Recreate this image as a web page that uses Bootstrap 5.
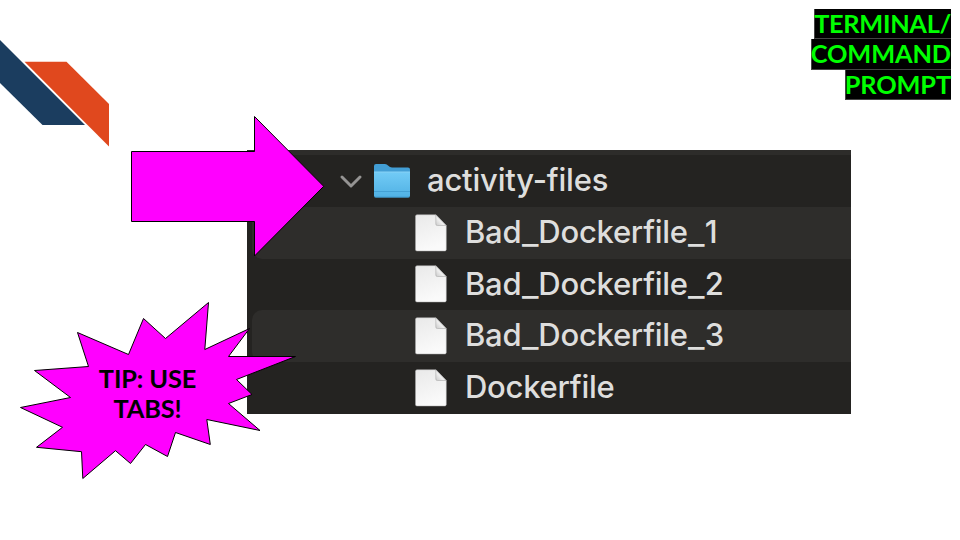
<!DOCTYPE html>
<html lang="en">
<head>
<meta charset="utf-8">
<meta name="viewport" content="width=device-width, initial-scale=1">
<title>Terminal / Command Prompt</title>
<link href="https://cdn.jsdelivr.net/npm/bootstrap@5.3.0/dist/css/bootstrap.min.css" rel="stylesheet">
<style>
  body { font-family: Lato, sans-serif; background: #fff; color: #000; }
  .slide { width: 960px; height: 540px; padding-top: 150px; padding-left: 247px; }
  .brand-mark { left: 0; top: 0; }
  .slide-title { top: 9px; right: 9px; font-size: 25.33px; line-height: 28.6px; letter-spacing: -.12px; font-weight: 700; color: #0f0; }
  .slide-title span { background: #000; height: 30.33px; box-shadow: inset 1px 0 #444, inset 0 -1px #444; }
  .slide-title span:first-child { letter-spacing: -.3px; }
  .finder { width: 604px; height: 264px; background: #242321; border-top: 5px solid #2d2c2a;
    font-family: Inter, "Liberation Sans", sans-serif; font-size: 31px; font-weight: 500; color: #dededd; }
  .entry { height: 51.8px; line-height: 50px; margin-left: 5px; }
  .entry.striped { background: #2e2d2b; border-radius: 10px 0 0 10px; }
  .entry.folder { padding-left: 88px; }
  .entry.file { padding-left: 163px; }
  .label { padding-bottom: 1.8px; }
  .folder .label { margin-left: 15px; letter-spacing: -.2px; }
  .file .label { margin-left: 18px; letter-spacing: -.25px; }
  .bar { display: inline-block; margin: 0 1.4px; transform: translateY(1px) scaleX(1.15); }
  .callout { left: 0; top: 0; }
  .tip { left: 78px; top: 363px; width: 139px; font-size: 25.33px; line-height: 30.33px; letter-spacing: -.12px; font-weight: 700; }
</style>
</head>
<body>
<svg width="0" height="0" class="position-absolute">
  <defs>
    <linearGradient id="paper" x1="0" y1="0" x2=".3" y2="1"><stop offset="0" stop-color="#e9e9e9"/><stop offset="1" stop-color="#fafafa"/></linearGradient>
    <linearGradient id="fold" x1="1" y1="0" x2="0" y2="1"><stop offset=".4" stop-color="#fff"/><stop offset="1" stop-color="#c9c9c9"/></linearGradient>
    <linearGradient id="blue" x1="0" y1="0" x2="0" y2="1"><stop offset="0" stop-color="#72cbf6"/><stop offset="1" stop-color="#50b1e4"/></linearGradient>
    <symbol id="doc" viewBox="0 0 32 38">
      <path d="M2 .7H21L31.3 11.5V35.5Q31.3 37 29.8 37H2Q.5 37 .5 35.5V2.2Q.5 .7 2 .7Z" fill="url(#paper)" stroke="#aaa" stroke-width=".5"/>
      <path d="M20.8 1V10Q20.8 11.5 22.3 11.5H31Z" fill="url(#fold)" stroke="#aaa" stroke-width=".6"/>
    </symbol>
  </defs>
</svg>
<main class="slide position-relative overflow-hidden">
  <svg class="brand-mark position-absolute" width="110" height="150">
    <path d="M0 40L85 125H42.500L0 83Z" fill="#1b3d5f"/>
    <path d="M24.500 61.700H66.500L109 104V146.500Z" fill="#e0481e"/>
  </svg>

  <h1 class="slide-title position-absolute m-0 d-flex flex-column align-items-end">
    <span>TERMINAL/</span><span>COMMAND</span><span>PROMPT</span>
  </h1>

  <section class="finder overflow-hidden">
    <div class="entry folder d-flex align-items-center">
      <svg class="flex-shrink-0" width="22" height="16" viewBox="0 0 22 16"><path d="M2 4L11 13L20 4" fill="none" stroke="#959493" stroke-width="2.900" stroke-linecap="round" stroke-linejoin="round"/></svg>
      <svg class="flex-shrink-0 ms-2" width="45" height="36" viewBox="-3 0 45 36">
        <path d="M1 3Q1 1 3 1H12Q14 1 15 2.500Q17 4.500 19 4.500H35Q37 4.500 37 6.500V12H1Z" fill="#429ed5"/>
        <path d="M1 9H37V32.500Q37 34.500 35 34.500H3Q1 34.500 1 32.500Z" fill="url(#blue)"/>
        <path d="M1 9H37" stroke="#88d2f5"/><path d="M1 28.500H37M1.500 34H36.500" stroke="#3e9bce" stroke-width=".8"/>
      </svg>
      <span class="label ms-2 ps-1">activity-files</span>
    </div>
    <div class="entry file striped d-flex align-items-center"><svg width="32" height="38"><use href="#doc"/></svg><span class="label">Bad<span class="bar">_</span>Dockerfile<span class="bar">_</span>1</span></div>
    <div class="entry file d-flex align-items-center"><svg width="32" height="38"><use href="#doc"/></svg><span class="label">Bad<span class="bar">_</span>Dockerfile<span class="bar">_</span>2</span></div>
    <div class="entry file striped d-flex align-items-center"><svg width="32" height="38"><use href="#doc"/></svg><span class="label">Bad<span class="bar">_</span>Dockerfile<span class="bar">_</span>3</span></div>
    <div class="entry file d-flex align-items-center"><svg width="32" height="38"><use href="#doc"/></svg><span class="label">Dockerfile</span></div>
  </section>

  <svg class="callout position-absolute" width="340" height="500" fill="#f0f" stroke="#000" stroke-width="1">
    <path d="M131.500 151.500H254.500V116.500L323.700 186.300L254.500 256V221.500H131.500Z"/>
    <path d="M165.500 338.500L208.500 302.500L204.800 349.500L249.500 328.500L228.500 356.500H295.500L236.500 379.500L252 394.500L228.500 403.500L260 430.500L206.800 419.500L210.300 444.500L175.500 432.500L167.500 456.500L145.500 444.500L130.500 463.500L115.500 450.700L82.800 478.500L81.500 451.700L36.500 447.300L62.500 427.300L20.500 407.500L70.500 397.500L34.500 370.500L88.500 366.500L77.500 332.500L128.500 354.500L143.500 318.500Z"/>
  </svg>
  <div class="tip position-absolute text-center">TIP: USE<br>TABS!</div>
</main>
<script src="https://cdn.jsdelivr.net/npm/bootstrap@5.3.0/dist/js/bootstrap.bundle.min.js"></script>
</body>
</html>
